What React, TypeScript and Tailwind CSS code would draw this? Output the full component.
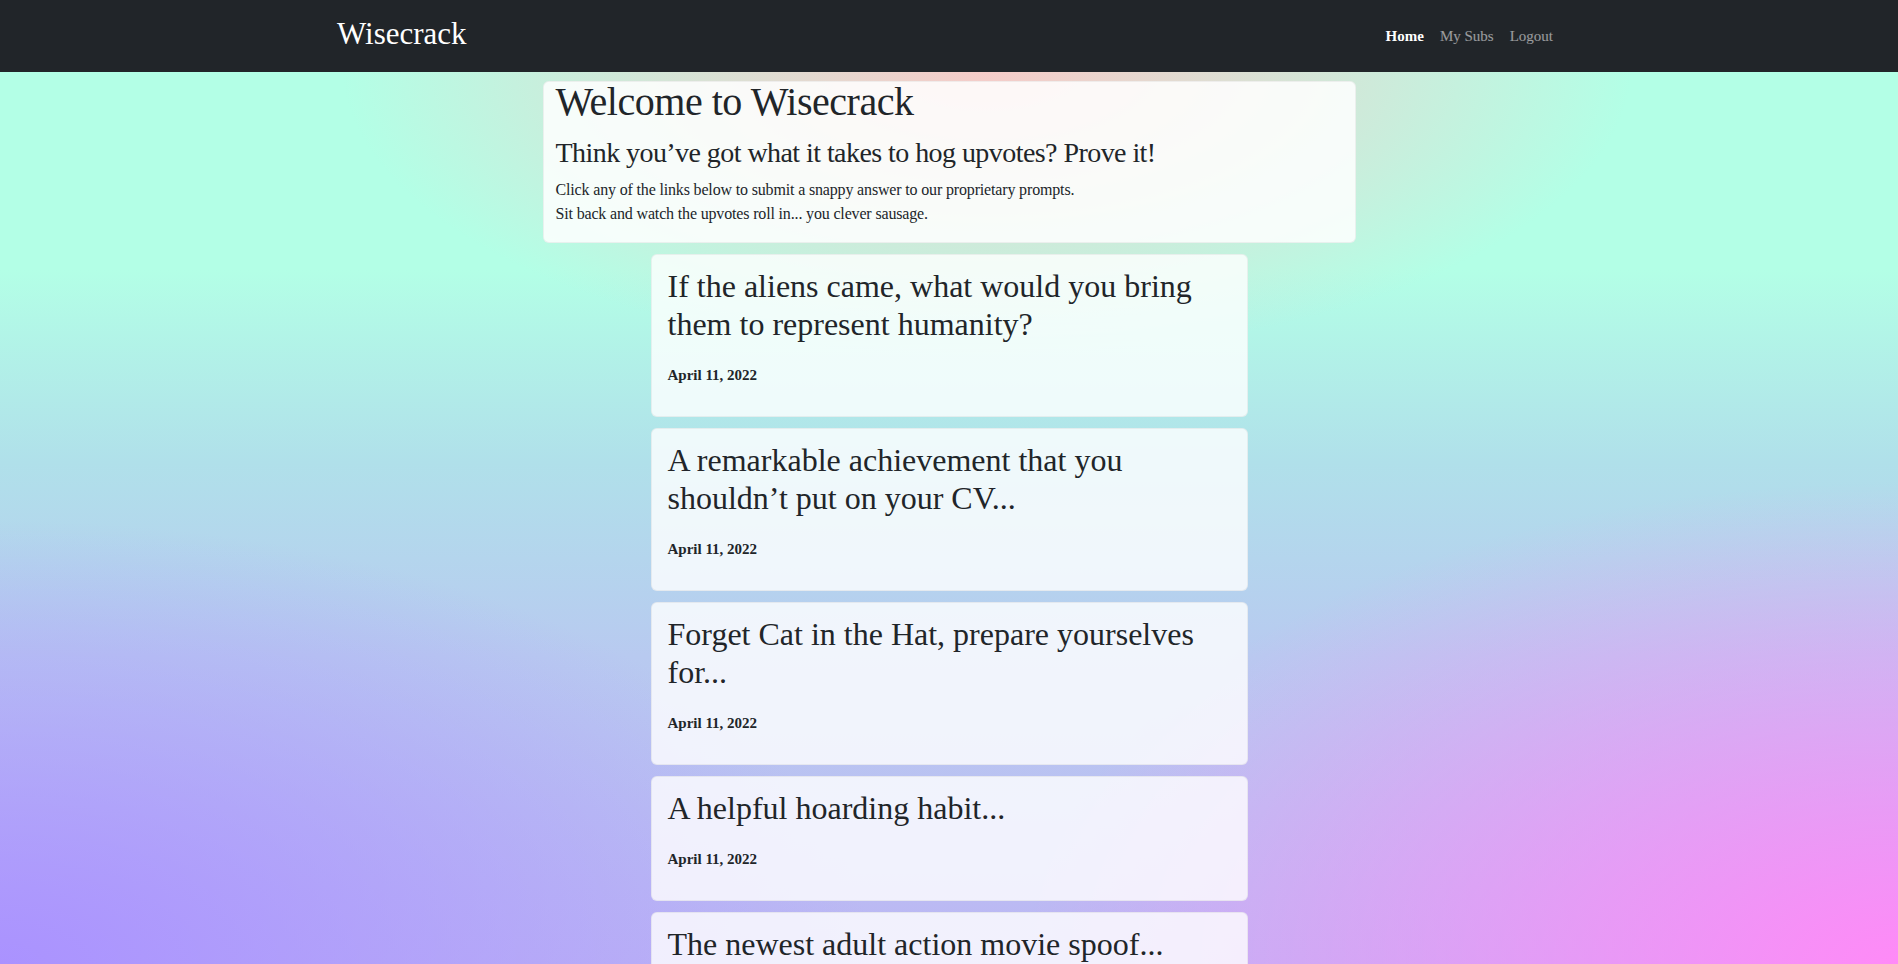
import React from "react";

const prompts = [
  { id: 1, text: "If the aliens came, what would you bring them to represent humanity?", date: "April 11, 2022" },
  { id: 2, text: "A remarkable achievement that you shouldn’t put on your CV...", date: "April 11, 2022" },
  { id: 3, text: "Forget Cat in the Hat, prepare yourselves for...", date: "April 11, 2022" },
  { id: 4, text: "A helpful hoarding habit...", date: "April 11, 2022" },
  { id: 5, text: "The newest adult action movie spoof...", date: "April 11, 2022" },
];

function Navbar() {
  return (
    <nav className="h-[72px] bg-[#212529]">
      <div className="mx-auto flex h-full w-[1224px] items-center justify-between">
        <a href="#" className="pb-[5px] text-[31px] leading-none text-white">
          Wisecrack
        </a>

        <ul className="flex items-center text-[15px] leading-6">
          <li>
            <a href="#" className="px-2 font-bold text-white">
              Home
            </a>
          </li>
          <li>
            <a href="#" className="px-2 text-white/55">
              My Subs
            </a>
          </li>
          <li>
            <a href="#" className="px-2 text-white/55">
              Logout
            </a>
          </li>
        </ul>
      </div>
    </nav>
  );
}

function PromptCard({ text, date }: { text: string; date: string }) {
  return (
    <a
      href="#"
      className="block w-[597px] rounded-md border border-black/5 bg-white/80 px-4 pt-3 pb-[29px] text-[#212529]"
    >
      <h2 className="mb-5 text-[32px] leading-[38px]">{text}</h2>
      <p className="text-[15px] leading-6 font-bold">{date}</p>
    </a>
  );
}

export default function App() {
  return (
    <div className="min-h-screen bg-fixed bg-[image:radial-gradient(ellipse_34%_30%_at_52%_7%,rgba(250,200,198,0.95),rgba(250,200,198,0)),radial-gradient(ellipse_46%_46%_at_0%_100%,#aa92ff,rgba(170,146,255,0)),radial-gradient(ellipse_46%_50%_at_100%_100%,#ff8af7,rgba(255,138,247,0)),linear-gradient(to_bottom,#b3ffe6_0%,#b3ffe6_28%,#b0e0ea_48%,#b8caf0_68%,#bcb6f4_100%)] font-['Liberation_Serif',serif] text-[#212529]">
      <Navbar />

      <main className="flex flex-col items-center gap-[11px] pt-[9px] pb-10">
        {/* Intro */}
        <section className="w-[813px] rounded-md border border-black/5 bg-white/85 px-3 pt-0 pb-4">
          <h1 className="mb-[14px] text-[40px] leading-10 tracking-[-0.012em]">Welcome to Wisecrack</h1>
          <h3 className="mb-2 text-[28px] leading-[34px] tracking-[-0.02em]">
            Think you’ve got what it takes to hog upvotes? Prove it!
          </h3>
          <p className="text-base leading-6 tracking-[-0.01em]">
            Click any of the links below to submit a snappy answer to our proprietary prompts.
            <br />
            Sit back and watch the upvotes roll in... you clever sausage.
          </p>
        </section>

        {prompts.map((p) => (
          <PromptCard key={p.id} text={p.text} date={p.date} />
        ))}
      </main>
    </div>
  );
}
